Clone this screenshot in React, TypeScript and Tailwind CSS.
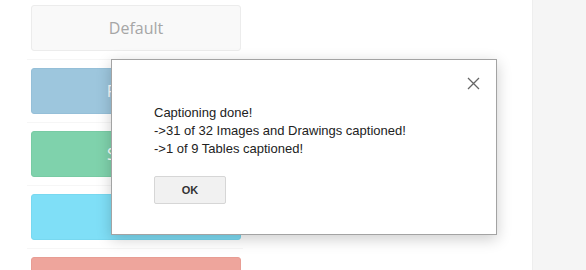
import React from 'react';

interface Btn {
  label: string;
  className: string;
}

const buttons: Btn[] = [
  { label: 'Default', className: 'bg-[#f9f9f9] border-[#ececec] text-[#a6a6a6]' },
  { label: 'Primary', className: 'bg-[#9dc6dd] border-[#95bfd8] text-white' },
  { label: 'Success', className: 'bg-[#7fd2ac] border-[#78cba4] text-white' },
  { label: 'Info', className: 'bg-[#7fdff7] border-[#78d8f0] text-white' },
  { label: 'Danger', className: 'bg-[#eea59c] border-[#e89d94] text-white' },
];

const App: React.FC = () => {
  return (
    <div className="relative flex h-[270px] w-[586px] overflow-hidden bg-white font-['Open_Sans',sans-serif]">
      <main className="flex-1 pl-[31px] pt-[5px]">
        {buttons.map((b) => (
          <div key={b.label}>
            <div
              className={`flex h-[46px] w-[210px] items-center justify-center rounded-[3px] border text-[16px] ${b.className}`}
            >
              {b.label}
            </div>
            <div className="my-2 -ml-1 h-px w-[216px] bg-[#f6f6f6]" />
          </div>
        ))}
      </main>
      <aside className="w-[54px] border-l border-[#eeeeee] bg-[#f5f5f5]" />

      {/* caption result dialog */}
      <div className="absolute left-[111px] top-[59px] h-[176px] w-[386px] border border-[#a3a3a3] bg-white shadow-[0_4px_14px_rgba(0,0,0,0.2)] font-['Liberation_Sans',Arial,sans-serif]">
        <button className="absolute right-[16px] top-[17px] text-[#666]">
          <svg width="13" height="13" viewBox="0 0 13 13" fill="none" stroke="currentColor" strokeWidth="1.3">
            <path d="M1 1L12 12M12 1L1 12" />
          </svg>
        </button>
        <div className="pl-[42px] pt-[44px] text-[13px] leading-[18px] text-[#222]">
          <p>Captioning done!</p>
          <p>-&gt;31 of 32 Images and Drawings captioned!</p>
          <p>-&gt;1 of 9 Tables captioned!</p>
          <button className="mt-[18px] h-[28px] w-[72px] rounded-[2px] border border-[#d6d6d6] bg-[#f1f1f1] text-[11px] font-bold text-[#333]">
            OK
          </button>
        </div>
      </div>
    </div>
  );
};

export default App;
